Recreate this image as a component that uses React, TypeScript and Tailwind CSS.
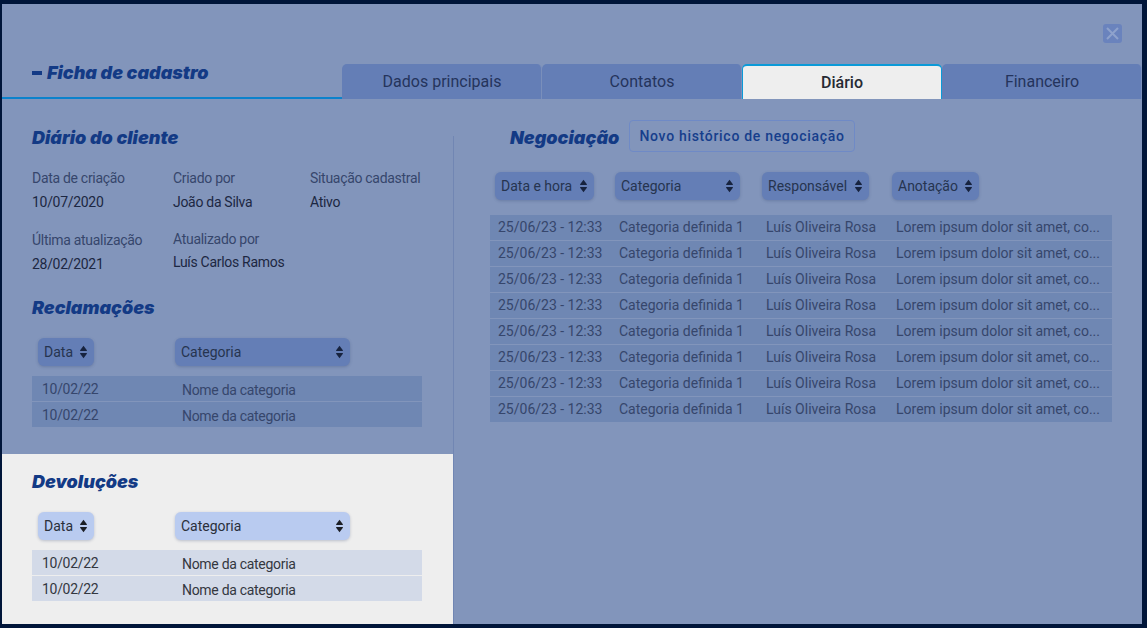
import React from "react";

const headingFont = "font-['Inter',sans-serif] font-black italic text-[#133a85]";

function SortIcon({ color = "#17233f" }: { color?: string }) {
  return (
    <svg width="9" height="14" viewBox="0 0 9 14" className="shrink-0">
      <path d="M4.5 0.8 L7.9 5.2 Q8.2 6 7.4 6 L1.6 6 Q0.8 6 1.1 5.2 Z" fill={color} />
      <path d="M4.5 13.2 L7.9 8.8 Q8.2 8 7.4 8 L1.6 8 Q0.8 8 1.1 8.8 Z" fill={color} />
    </svg>
  );
}

function Select({ label, className, light }: { label: string; className: string; light?: boolean }) {
  return (
    <div
      className={`flex h-7 items-center justify-between rounded-md pl-[6px] pr-[6px] text-sm shadow-[0_1px_3px_rgba(30,50,100,0.25)] ${
        light ? "bg-[#b9cbf0] text-[#2a2f3a]" : "bg-[#647eb6] text-[#26344f]"
      } ${className}`}
    >
      <span>{label}</span>
      <SortIcon color={light ? "#1c1f26" : "#17233f"} />
    </div>
  );
}

function Field({ label, value, className }: { label: string; value: string; className: string }) {
  return (
    <div className={className}>
      <div className="text-sm leading-5 tracking-[-0.3px] text-[#36466c]">{label}</div>
      <div className="mt-1 text-sm leading-5 tracking-[-0.3px] text-[#1c2742]">{value}</div>
    </div>
  );
}

function CategoryTable({ light }: { light?: boolean }) {
  return (
    <div className={`mt-[10px] ml-[30px] flex w-[390px] flex-col gap-px text-sm tracking-[-0.3px] ${light ? "text-[#33373f]" : "text-[#36466c]"}`}>
      {[0, 1].map((i) => (
        <div key={i} className={`flex h-[25px] items-center ${light ? "bg-[#d3dae8]" : "bg-[#6f87b3]"}`}>
          <span className="ml-[10px] w-[140px]">10/02/22</span>
          <span className="mt-[3px]">Nome da categoria</span>
        </div>
      ))}
    </div>
  );
}

function SortRow({ light }: { light?: boolean }) {
  return (
    <div className="mt-[18px] ml-[36px] flex gap-[81px]">
      <Select label="Data" className="w-[56px]" light={light} />
      <Select label="Categoria" className="w-[175px]" light={light} />
    </div>
  );
}

const tabs = ["Dados principais", "Contatos", "Diário", "Financeiro"];

export default function App() {
  return (
    <div className="h-[628px] w-[1147px] overflow-hidden bg-[#001539] pt-1 pb-1 pl-[2px] pr-[5px] font-['Roboto',sans-serif]">
      <div className="flex h-full flex-col bg-[#8295bb]">
        {/* Header with tabs */}
        <div className="relative flex h-[95px] shrink-0 items-end border-b-2 border-[#0b82cc]">
          <button className="absolute top-[20px] right-[20px] flex h-[19px] w-[19px] items-center justify-center rounded-[3px] bg-[#6a83bd]">
            <svg width="13" height="13" viewBox="0 0 13 13" fill="none" stroke="#8ea2cc" strokeWidth="2">
              <path d="M1 1 L12 12 M12 1 L1 12" />
            </svg>
          </button>
          <div className={`mb-[12px] ml-[30px] flex w-[310px] items-center text-[18px] leading-6 ${headingFont}`}>
            <span className="mr-[5px] h-[4px] w-[10px] bg-[#133a85]" />
            Ficha de cadastro
          </div>
          <div className="-mb-[2px] flex">
            {tabs.map((tab) =>
              tab === "Diário" ? (
                <div
                  key={tab}
                  className="flex h-[35px] w-[200px] items-center justify-center rounded-t-[5px] border-x border-t-2 border-[#0a9ad8] bg-[#eeeeee] pt-px text-base font-medium text-[#262a33]"
                >
                  {tab}
                </div>
              ) : (
                <div
                  key={tab}
                  className="flex h-[35px] w-[200px] items-center justify-center rounded-t-[5px] border-r border-[#7a8fbb] bg-[#647eb6] pt-px pl-px text-base text-[#24345c]"
                >
                  {tab}
                </div>
              )
            )}
          </div>
        </div>

        <div className="flex min-h-0 flex-1">
          {/* Left column */}
          <div className="flex w-[451px] shrink-0 flex-col">
            <div className="flex-1 pt-[27px]">
              <h2 className={`ml-[30px] text-[18px] leading-6 ${headingFont}`}>Diário do cliente</h2>
              <div className="mt-[18px] ml-[30px] flex">
                <Field label="Data de criação" value="10/07/2020" className="w-[141px]" />
                <Field label="Criado por" value="João da Silva" className="w-[137px]" />
                <Field label="Situação cadastral" value="Ativo" className="" />
              </div>
              <div className="mt-[18px] ml-[30px] flex">
                <Field label="Última atualização" value="28/02/2021" className="w-[141px]" />
                <div className="-mt-[1px] w-[137px]">
                  <div className="text-sm leading-5 tracking-[-0.3px] text-[#36466c]">Atualizado por</div>
                  <div className="mt-[3px] text-sm leading-5 tracking-[-0.3px] text-[#1c2742]">Luís Carlos Ramos</div>
                </div>
              </div>
              <h2 className={`mt-[22px] ml-[30px] text-[18px] leading-6 ${headingFont}`}>Reclamações</h2>
              <SortRow />
              <CategoryTable />
            </div>
            <div className="h-[170px] shrink-0 bg-[#eeeeee] pt-[16px]">
              <h2 className={`ml-[30px] text-[18px] leading-6 ${headingFont}`}>Devoluções</h2>
              <SortRow light />
              <CategoryTable light />
            </div>
          </div>

          <div className="mt-[37px] w-px shrink-0 bg-[#7186b3]" />

          {/* Right column */}
          <div className="flex-1 pt-[21px]">
            <div className="flex items-center">
              <h2 className={`mt-[3px] ml-[56px] w-[119px] text-[18px] leading-6 ${headingFont}`}>Negociação</h2>
              <button className="flex h-8 w-[226px] items-center justify-center rounded-[4px] border border-[#6f8ac6] text-sm font-medium tracking-[0.7px] text-[#163e8c]">
                Novo histórico de negociação
              </button>
            </div>
            <div className="mt-[20px] ml-[41px] flex">
              <Select label="Data e hora" className="w-[99px]" />
              <Select label="Categoria" className="ml-[21px] w-[125px]" />
              <Select label="Responsável" className="ml-[22px] w-[107px]" />
              <Select label="Anotação" className="ml-[23px] w-[87px]" />
            </div>
            <div className="mt-[15px] ml-[36px] flex w-[622px] flex-col gap-px text-sm text-[#36466c]">
              {Array.from({ length: 8 }).map((_, i) => (
                <div key={i} className="flex h-[25px] items-center whitespace-nowrap bg-[#6f87b3] pb-px pl-2">
                  <span className="w-[121px]">25/06/23 - 12:33</span>
                  <span className="w-[147px]">Categoria definida 1</span>
                  <span className="w-[130px]">Luís Oliveira Rosa</span>
                  <span>Lorem ipsum dolor sit amet, co...</span>
                </div>
              ))}
            </div>
          </div>
        </div>
      </div>
    </div>
  );
}
